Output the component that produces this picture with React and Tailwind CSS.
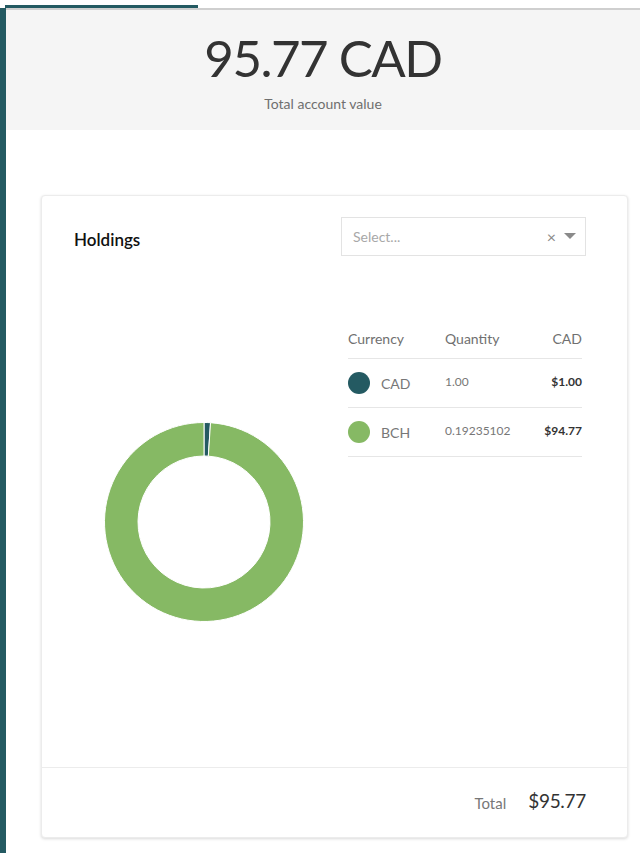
import { useMemo } from 'react';

const TEAL = '#245a62';
const GREEN = '#86b964';

const holdings = [
  { code: 'CAD', qty: '1.00', value: 1.0, color: TEAL },
  { code: 'BCH', qty: '0.19235102', value: 94.77, color: GREEN },
];

const polar = (cx, cy, r, deg) => {
  const a = ((deg - 90) * Math.PI) / 180;
  return [cx + r * Math.cos(a), cy + r * Math.sin(a)];
};

const slicePath = (start, end, R, r) => {
  const c = 100;
  const [x1, y1] = polar(c, c, R, start);
  const [x2, y2] = polar(c, c, R, end);
  const [x3, y3] = polar(c, c, r, end);
  const [x4, y4] = polar(c, c, r, start);
  const large = end - start > 180 ? 1 : 0;
  return `M${x1} ${y1} A${R} ${R} 0 ${large} 1 ${x2} ${y2} L${x3} ${y3} A${r} ${r} 0 ${large} 0 ${x4} ${y4} Z`;
};

const Donut = () => {
  const total = holdings.reduce((s, h) => s + h.value, 0);
  const slices = useMemo(() => {
    let acc = 0;
    return holdings.map((h) => {
      const start = (acc / total) * 360;
      acc += h.value;
      const end = (acc / total) * 360;
      return { ...h, d: slicePath(start, end, 99.5, 66) };
    });
  }, [total]);

  return (
    <svg width="200" height="200" viewBox="0 0 200 200">
      {slices.map((s) => (
        <path key={s.code} d={s.d} fill={s.color} stroke="#fff" strokeWidth="1" />
      ))}
    </svg>
  );
};

export default function App() {
  return (
    <div className="min-h-[853px] bg-white" style={{ fontFamily: 'Lato, "Open Sans", sans-serif' }}>
      <div className="h-[8px] pl-[5px] pt-[5px]">
        <div className="h-[3px] w-[193px] bg-[#245a62]" />
      </div>
      <div className="flex">
        <div className="w-[6px] shrink-0 bg-[#245a62] min-h-[845px]" />
        <div className="flex-1">
          <div className="h-[2px] bg-[#cfcfcf]" />
          <div className="bg-[#f5f5f5] h-[120px] flex flex-col items-center pt-[18px]">
            <div className="text-[51px] leading-[60px] text-[#333] tracking-[-1.5px]">95.77 CAD</div>
            <div className="text-[14px] text-[#6f6f6f] mt-[5px]">Total account value</div>
          </div>

          <div className="ml-[35px] mr-[12px] mt-[65px] h-[643px] bg-white rounded-[4px] border border-[#ececec] shadow-[0_1px_3px_rgba(0,0,0,0.15)] flex flex-col">
            <div className="h-[571px] flex flex-col">
              <div className="flex items-center justify-between pt-[21px] pr-[41px]">
                <div className="pl-[32px] text-[17px] font-semibold text-[#111] mt-[6px]">Holdings</div>
                <div className="w-[245px] h-[39px] border border-[#e3e3e3] flex items-center pl-[11px] pr-[9px]">
                  <span className="flex-1 text-[14px] text-[#a8a8a8]">Select...</span>
                  <span className="text-[16px] text-[#8a8a8a] mr-[8px] leading-none">×</span>
                  <svg width="12" height="7" viewBox="0 0 12 7">
                    <path d="M0 0 L12 0 L6 6 Z" fill="#8a8a8a" />
                  </svg>
                </div>
              </div>

              <div className="flex">
                <div className="w-[306px] shrink-0 pl-[62px] pt-[166px]">
                  <Donut />
                </div>
                <div className="w-[234px] pt-[69px]">
                  <div className="flex items-start pt-[3px] h-[34px] border-b border-[#e6e6e6] text-[14px] text-[#707070]">
                    <div className="w-[97px]">Currency</div>
                    <div className="flex-1">Quantity</div>
                    <div className="text-right">CAD</div>
                  </div>
                  {holdings.map((h) => (
                    <div key={h.code} className="flex items-center h-[49px] border-b border-[#e6e6e6]">
                      <div className="w-[97px] flex items-center">
                        <span className="w-[22px] h-[22px] rounded-full" style={{ backgroundColor: h.color }} />
                        <span className="ml-[11px] text-[14px] text-[#777]">{h.code}</span>
                      </div>
                      <div className="flex-1 text-[12px] text-[#777] -mt-[2px]">{h.qty}</div>
                      <div className="text-right text-[12px] font-bold text-[#333] -mt-[2px]">
                        ${h.value.toFixed(2)}
                      </div>
                    </div>
                  ))}
                </div>
              </div>
            </div>
            <div className="flex-1 border-t border-[#ececec] flex items-center justify-end pr-[41px] pb-[2px]">
              <span className="text-[15px] text-[#777] mr-[22px] mt-[3px]">Total</span>
              <span className="text-[19px] text-[#333] tracking-[-0.3px]">$95.77</span>
            </div>
          </div>
        </div>
      </div>
    </div>
  );
}
